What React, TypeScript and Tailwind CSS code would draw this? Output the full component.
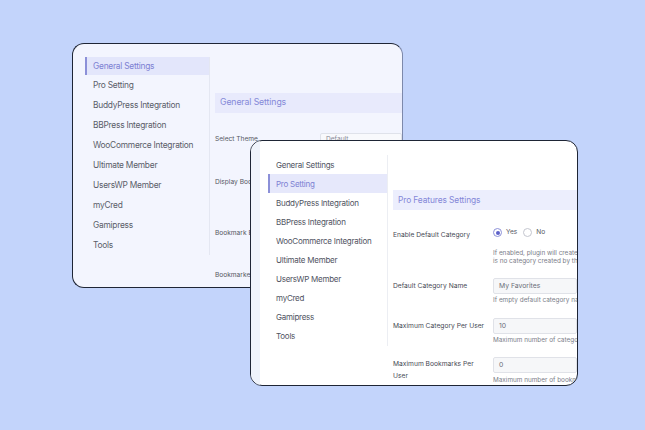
const menu = [
  "General Settings",
  "Pro Setting",
  "BuddyPress Integration",
  "BBPress Integration",
  "WooCommerce Integration",
  "Ultimate Member",
  "UsersWP Member",
  "myCred",
  "Gamipress",
  "Tools",
];

function BackWindow() {
  return (
    <div className="absolute left-[72px] top-[43px] w-[331px] h-[245px] rounded-[12px] border border-[#1e2535] border-r-[#7d89ab] bg-[#f3f5fe] overflow-hidden">
      <div className="flex items-start pl-[12px] pt-[13px]">
        {/* sidebar */}
        <div className="w-[125px] shrink-0 border-r border-[#e4e7f2] text-[8.4px] tracking-[-0.25px] text-[#5a5d69] whitespace-nowrap">
          {menu.map((item, i) => (
            <div
              key={item}
              className={
                i === 0
                  ? "h-[18px] flex items-center pl-[6px] border-l-2 border-[#8c90d8] bg-[#e3e6fb] text-[#7d81d3]"
                  : "h-[20px] flex items-center pl-[8px]"
              }
            >
              {item}
            </div>
          ))}
        </div>

        {/* content */}
        <div className="flex-1 pl-[5px] pt-[36px] min-w-0">
          <div className="h-[20px] flex items-center pl-[5px] bg-[#e8eafc] text-[8.7px] tracking-[-0.1px] text-[#8488d8] whitespace-nowrap">
            General Settings
          </div>
          <div className="flex items-center mt-[20px] h-[14px]">
            <div className="w-[105px] shrink-0 text-[6.6px] text-[#555863]">Select Theme</div>
            <div className="flex-1 h-[14px] border border-[#dfe2ea] bg-[#f8f9fc] rounded-[2px] pl-[5px] text-[6.6px] text-[#888b96] flex items-center">
              Default
            </div>
          </div>
          <div className="mt-[31px] text-[6.6px] text-[#555863] whitespace-nowrap">Display Bookmark</div>
          <div className="mt-[41px] text-[6.6px] text-[#555863] whitespace-nowrap">Bookmark Button</div>
          <div className="mt-[32px] text-[6.6px] text-[#555863] whitespace-nowrap">Bookmarked Text</div>
        </div>
      </div>
    </div>
  );
}

function Radio({ checked, label }: { checked?: boolean; label: string }) {
  return (
    <div className="flex items-center gap-[4px]">
      <span
        className={
          checked
            ? "w-[9px] h-[9px] rounded-full border border-[#8c90d8] bg-white flex items-center justify-center"
            : "w-[9px] h-[9px] rounded-full border border-[#c4c6cf] bg-white"
        }
      >
        {checked && <span className="w-[4px] h-[4px] rounded-full bg-[#5d61c9]" />}
      </span>
      <span className="text-[6.6px] text-[#555863]">{label}</span>
    </div>
  );
}

function Field({ value }: { value: string }) {
  return (
    <div className="h-[16px] border border-[#e0e2e8] bg-[#f6f7f9] rounded-[2px] pl-[5px] flex items-center text-[6.8px] text-[#6a6d78] whitespace-nowrap">
      {value}
    </div>
  );
}

function Help({ children }: { children: React.ReactNode }) {
  return <div className="text-[6.4px] leading-[8px] text-[#7b7e89] whitespace-nowrap">{children}</div>;
}

function FrontWindow() {
  return (
    <div className="absolute left-[250px] top-[140px] w-[328px] h-[246px] rounded-[12px] border border-[#1e2535] bg-white overflow-hidden flex">
      <div className="w-[9px] shrink-0 bg-[#eff3fb]" />
      <div className="flex-1 flex items-start pl-[8px] pt-[14px] min-w-0">
        {/* sidebar */}
        <div className="w-[120px] shrink-0 h-[191px] border-r border-[#eceef3] text-[8px] tracking-[-0.25px] text-[#50535f] whitespace-nowrap">
          {menu.map((item, i) => (
            <div
              key={item}
              className={
                i === 1
                  ? "h-[19.1px] flex items-center pl-[6px] border-l-2 border-[#8c90d8] bg-[#e6e8fb] text-[#7d81d3]"
                  : "h-[19.1px] flex items-center pl-[8px]"
              }
            >
              {item}
            </div>
          ))}
        </div>

        {/* content */}
        <div className="flex-1 pl-[5px] pt-[35px] min-w-0">
          <div className="h-[20px] flex items-center pl-[5px] bg-[#eceefd] text-[8.4px] tracking-[-0.1px] text-[#8488d8] whitespace-nowrap">
            Pro Features Settings
          </div>

          <div className="flex mt-[16px]">
            <div className="w-[100px] shrink-0 pt-[3px] text-[6.7px] leading-[12px] text-[#474a55]">Enable Default Category</div>
            <div className="flex-1 min-w-0">
              <div className="h-[14px] flex items-center gap-[6px]">
                <Radio checked label="Yes" />
                <Radio label="No" />
              </div>
              <div className="mt-[9px]">
                <Help>If enabled, plugin will create a default category for user if there</Help>
                <Help>is no category created by the user</Help>
              </div>
            </div>
          </div>

          <div className="flex mt-[13px]">
            <div className="w-[100px] shrink-0 h-[16px] flex items-center text-[6.7px] text-[#474a55]">Default Category Name</div>
            <div className="flex-1 min-w-0">
              <Field value="My Favorites" />
              <div className="mt-[2px]">
                <Help>If empty default category name will be used</Help>
              </div>
            </div>
          </div>

          <div className="flex mt-[14px]">
            <div className="w-[100px] shrink-0 h-[16px] flex items-center text-[6.7px] text-[#474a55] whitespace-nowrap">Maximum Category Per User</div>
            <div className="flex-1 min-w-0">
              <Field value="10" />
              <div className="mt-[2px]">
                <Help>Maximum number of category a user can create</Help>
              </div>
            </div>
          </div>

          <div className="flex mt-[13px]">
            <div className="w-[100px] shrink-0 pt-[1px] text-[6.7px] leading-[12px] text-[#474a55]">
              Maximum Bookmarks Per
              <br />
              User
            </div>
            <div className="flex-1 min-w-0">
              <Field value="0" />
              <div className="mt-[3px]">
                <Help>Maximum number of bookmarks a user can create</Help>
              </div>
            </div>
          </div>
        </div>
      </div>
    </div>
  );
}

export default function App() {
  return (
    <div
      className="relative w-[645px] h-[430px] bg-[#c3d4fb] overflow-hidden"
      style={{ fontFamily: "Inter, 'Noto Sans', sans-serif" }}
    >
      <BackWindow />
      <FrontWindow />
    </div>
  );
}
